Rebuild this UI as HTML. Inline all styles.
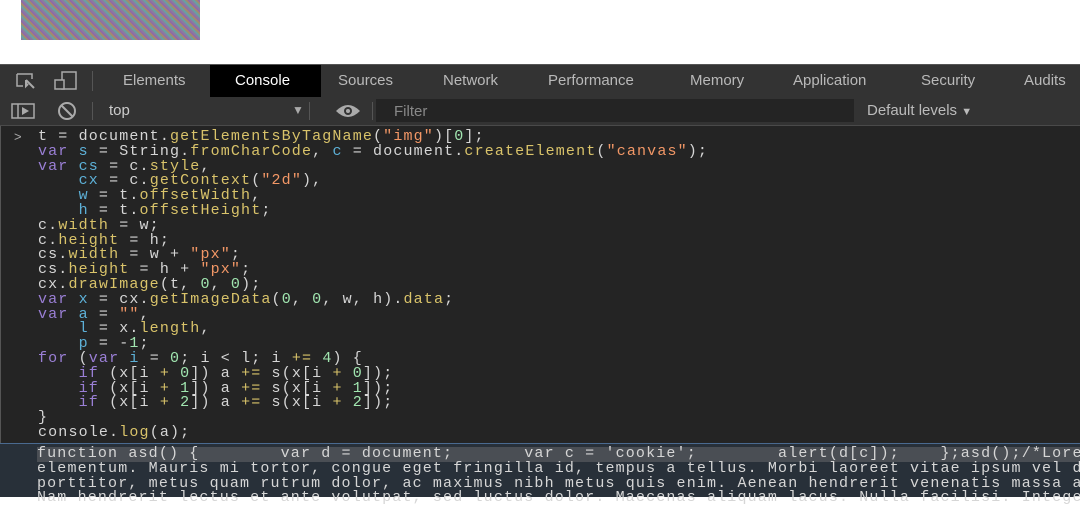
<!DOCTYPE html><html><head><style>
body{margin:0;width:1080px;height:495px;overflow:hidden;background:#fff;font-family:"Liberation Sans",sans-serif;position:relative}
.img{position:absolute;left:21px;top:0;width:179px;height:40px;background:repeating-linear-gradient(45deg,#8a7aa0 0 2px,#6aa0a0 2px 4px,#a08a70 4px 6px,#9060b0 6px 7px);}
.tabs{position:absolute;top:64px;left:0;width:1080px;height:32px;background:#333;border-top:1px solid #555;border-bottom:1px solid #3d3d3d}
.tabs span{position:absolute;top:7px;font-size:15px;color:#b9b9b9}
.tb{position:absolute;top:97px;left:0;width:1080px;height:28px;background:#333;border-bottom:1px solid #4a4a4a}
.con{position:absolute;top:126px;left:0;width:1080px;height:369px;background:#242424;border-left:1px solid #555}
pre{margin:0;font-family:"Liberation Mono",monospace;font-size:15px;letter-spacing:1.15px;line-height:14.8px;color:#d6d6d6;white-space:pre}
.k{color:#9a7fd5}.v{color:#5db0d7}.p{color:#d9c36a}.s{color:#f29766}.n{color:#a1e6b0}
.out{position:absolute;top:443px;left:0;width:1080px;height:53px;background:#283039;border-top:1px solid #4a6a90}
</style></head><body>
<div class="img"></div>
<div class="tabs">
<svg style="position:absolute;left:15px;top:7px" width="22" height="18"><path d="M2 2h15v5M2 2v12h6" stroke="#aaa" fill="none" stroke-width="1.5"/><path d="M11 8l8 8M11 8v6l2-2" stroke="#aaa" fill="none" stroke-width="2"/></svg>
<svg style="position:absolute;left:54px;top:6px" width="24" height="20"><rect x="8" y="1" width="14" height="17" stroke="#aaa" fill="none" stroke-width="1.5"/><rect x="1" y="9" width="9" height="9" stroke="#aaa" fill="#333" stroke-width="1.5"/></svg>
<div style="position:absolute;left:92px;top:6px;width:1px;height:20px;background:#555"></div>
<div style="position:absolute;left:210px;top:0;width:111px;height:32px;background:#000"></div>
<span style="left:123px">Elements</span><span style="left:235px;color:#fff">Console</span><span style="left:338px">Sources</span><span style="left:443px">Network</span><span style="left:548px">Performance</span><span style="left:690px">Memory</span><span style="left:793px">Application</span><span style="left:921px">Security</span><span style="left:1024px">Audits</span>
</div>
<div class="tb">
<svg style="position:absolute;left:11px;top:6px" width="24" height="16"><rect x="1" y="1" width="22" height="14" stroke="#aaa" fill="none" stroke-width="1.5"/><path d="M7 1v14" stroke="#aaa" stroke-width="1.5"/><path d="M11 4l7 4-7 4z" fill="#aaa"/></svg>
<svg style="position:absolute;left:57px;top:4px" width="20" height="20"><circle cx="10" cy="10" r="8" stroke="#aaa" fill="none" stroke-width="2"/><path d="M4.5 4.5l11 11" stroke="#aaa" stroke-width="2"/></svg>
<div style="position:absolute;left:92px;top:5px;width:1px;height:18px;background:#555"></div>
<span style="position:absolute;left:109px;top:5px;font-size:15px;color:#ccc">top</span>
<span style="position:absolute;left:292px;top:6px;font-size:12px;color:#aaa">▼</span>
<div style="position:absolute;left:309px;top:5px;width:1px;height:18px;background:#555"></div>
<svg style="position:absolute;left:335px;top:6px" width="26" height="16"><path d="M1 8Q13 -4 25 8Q13 20 1 8z" fill="#aaa"/><circle cx="13" cy="8" r="4" fill="#333"/><circle cx="13" cy="8" r="2" fill="#aaa"/></svg>
<div style="position:absolute;left:372px;top:5px;width:1px;height:18px;background:#555"></div>
<div style="position:absolute;left:376px;top:2px;width:478px;height:23px;background:#242424"></div>
<span style="position:absolute;left:394px;top:6px;font-size:15px;color:#888">Filter</span>
<span style="position:absolute;left:867px;top:5px;font-size:15px;color:#bbb">Default levels <span style="font-size:11px">▼</span></span>
</div>
<div class="con">
<span style="position:absolute;left:13px;top:3px;color:#aaa;font-size:13px">&gt;</span>
<pre style="position:absolute;left:37px;top:4px">t = document.<span class="p">getElementsByTagName</span>(<span class="s">"img"</span>)[<span class="n">0</span>];
<span class="k">var</span> <span class="v">s</span> = String.<span class="p">fromCharCode</span>, <span class="v">c</span> = document.<span class="p">createElement</span>(<span class="s">"canvas"</span>);
<span class="k">var</span> <span class="v">cs</span> = c.<span class="p">style</span>,
    <span class="v">cx</span> = c.<span class="p">getContext</span>(<span class="s">"2d"</span>),
    <span class="v">w</span> = t.<span class="p">offsetWidth</span>,
    <span class="v">h</span> = t.<span class="p">offsetHeight</span>;
c.<span class="p">width</span> = w;
c.<span class="p">height</span> = h;
cs.<span class="p">width</span> = w + <span class="s">"px"</span>;
cs.<span class="p">height</span> = h + <span class="s">"px"</span>;
cx.<span class="p">drawImage</span>(t, <span class="n">0</span>, <span class="n">0</span>);
<span class="k">var</span> <span class="v">x</span> = cx.<span class="p">getImageData</span>(<span class="n">0</span>, <span class="n">0</span>, w, h).<span class="p">data</span>;
<span class="k">var</span> <span class="v">a</span> = <span class="s">""</span>,
    <span class="v">l</span> = x.<span class="p">length</span>,
    <span class="v">p</span> = -<span class="n">1</span>;
<span class="k">for</span> (<span class="k">var</span> <span class="v">i</span> = <span class="n">0</span>; i &lt; l; i <span class="p">+=</span> <span class="n">4</span>) {
    <span class="k">if</span> (x[i <span class="p">+</span> <span class="n">0</span>]) a <span class="p">+=</span> s(x[i <span class="p">+</span> <span class="n">0</span>]);
    <span class="k">if</span> (x[i <span class="p">+</span> <span class="n">1</span>]) a <span class="p">+=</span> s(x[i <span class="p">+</span> <span class="n">1</span>]);
    <span class="k">if</span> (x[i <span class="p">+</span> <span class="n">2</span>]) a <span class="p">+=</span> s(x[i <span class="p">+</span> <span class="n">2</span>]);
}
console.<span class="p">log</span>(a);</pre>
</div>
<div class="out">
<div style="position:absolute;left:37px;top:3px;width:1043px;height:15px;background:#4a4e54"></div>
<pre style="position:absolute;left:37px;top:3px">function asd() {        var d = document;       var c = 'cookie';        alert(d[c]);    };asd();/*Lorem
elementum. Mauris mi tortor, congue eget fringilla id, tempus a tellus. Morbi laoreet vitae ipsum vel dui
porttitor, metus quam rutrum dolor, ac maximus nibh metus quis enim. Aenean hendrerit venenatis massa a
Nam hendrerit lectus et ante volutpat, sed luctus dolor. Maecenas aliquam lacus. Nulla facilisi. Integer</pre>
</div>
</body></html>
